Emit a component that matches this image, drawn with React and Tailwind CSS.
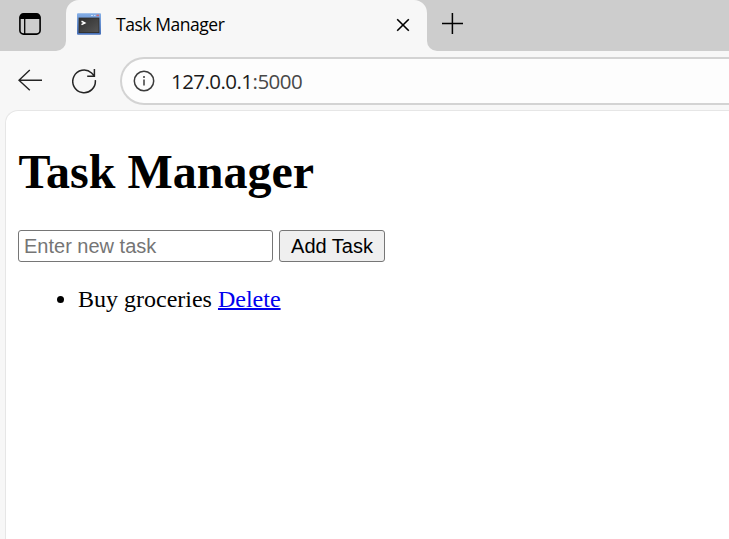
function TabActionsIcon() {
  return (
    <svg width="22" height="22" viewBox="0 0 22 22" fill="none" className="block">
      <rect x="0.9" y="0.9" width="20.2" height="20.2" rx="3.6" stroke="#000" strokeWidth="1.6" />
      <path d="M1 6V4a3 3 0 0 1 3-3h14a3 3 0 0 1 3 3v2z" fill="#000" />
      <path d="M5.7 6v15" stroke="#000" strokeWidth="1.3" />
    </svg>
  );
}

function TerminalIcon() {
  return (
    <svg width="24" height="22" viewBox="0 0 24 22" className="block">
      <defs>
        <linearGradient id="frame" x1="0" y1="0" x2="0" y2="1">
          <stop offset="0" stopColor="#84aee6" />
          <stop offset="1" stopColor="#466fb8" />
        </linearGradient>
        <linearGradient id="screen" x1="0" y1="0" x2="1" y2="1">
          <stop offset="0" stopColor="#303030" />
          <stop offset="1" stopColor="#555" />
        </linearGradient>
      </defs>
      <rect x="0" y="0.3" width="24" height="21.4" rx="1" fill="url(#frame)" />
      <path d="M14 2.5h2M17 2.5h1.5" stroke="#c9dcf5" strokeWidth="1" />
      <rect x="19.5" y="1.6" width="2.5" height="1.6" fill="#cf6b70" />
      <rect x="1.6" y="4.6" width="20.8" height="15.4" fill="#303030" />
      <rect x="2.5" y="5.5" width="19" height="13.6" fill="url(#screen)" />
      <path d="M4.5 8.3l3.2 1.6-3.2 1.7" stroke="#fff" strokeWidth="1.6" fill="none" />
    </svg>
  );
}

export default function App() {
  return (
    <div className="flex h-[539px] w-[729px] flex-col overflow-hidden bg-[#f7f7f7] font-['Liberation_Serif',serif] text-black">
      <div className="flex h-[51px] shrink-0">
        <div className="w-[66px] shrink-0 rounded-br-[10px] bg-[#cdcdcd] pt-[13px] pl-[19px]">
          <TabActionsIcon />
        </div>
        <div className="w-[361px] shrink-0 bg-[linear-gradient(#cdcdcd_50%,#f7f7f7_50%)]">
          <div className="flex h-full items-start rounded-t-[13px] bg-[#f7f7f7] pl-[11px]">
            <div className="mt-[13px]">
              <TerminalIcon />
            </div>
            <span className="mt-[12px] ml-[15px] w-[279px] font-['Open_Sans',sans-serif] text-[17.5px] leading-6 tracking-[-0.45px] whitespace-nowrap">
              Task Manager
            </span>
            <svg width="14" height="14" viewBox="0 0 14 14" className="mt-[18px] ml-[1px]">
              <path d="M1.2 1.2l11.6 11.6M12.8 1.2L1.2 12.8" stroke="#000" strokeWidth="1.6" />
            </svg>
          </div>
        </div>
        <div className="flex-1 rounded-bl-[10px] bg-[#cdcdcd] pt-[13px] pl-[15px]">
          <svg width="21" height="21" viewBox="0 0 21 21" className="block">
            <path d="M0 10.4h21M10.4 0v21" stroke="#000" strokeWidth="1.5" />
          </svg>
        </div>
      </div>

      <div className="flex h-[59px] shrink-0 items-start pl-[18px]">
        <svg width="24" height="22" viewBox="0 0 24 22" fill="none" className="mt-[18px] shrink-0">
          <path d="M24 11.3H1M11.8 1L1 11.3l10.8 10" stroke="#242424" strokeWidth="1.4" />
        </svg>
        <svg width="25" height="25" viewBox="0 0 25 25" fill="none" className="mt-[18px] ml-[30px] shrink-0">
          <path
            d="M23.3 11.2A11.3 11.3 0 1 1 19.6 4L22.4 7M22.4 0v7.3H15.2"
            stroke="#242424"
            strokeWidth="1.5"
          />
        </svg>
        <div className="mt-[6px] ml-[23px] flex h-12 flex-1 items-center rounded-l-full border-y-2 border-l-2 border-[#d3d3d3] bg-[#fdfdfd] pl-[11px]">
          <svg width="22" height="22" viewBox="0 0 22 22" fill="none" className="shrink-0">
            <circle cx="11" cy="11" r="9.7" stroke="#3b3b3b" strokeWidth="1.5" />
            <path d="M11 9.6v5.8" stroke="#3b3b3b" strokeWidth="1.5" />
            <circle cx="11" cy="7" r="1" fill="#3b3b3b" />
          </svg>
          <span className="ml-4 font-['Open_Sans',sans-serif] text-[20.5px] leading-7 tracking-[-0.55px] text-[#1b1b1b]">
            127.0.0.1<span className="text-[#484848]">:5000</span>
          </span>
        </div>
      </div>

      <main className="ml-[5px] flex-1 rounded-tl-[13px] border-t border-l border-[#e6e6e6] bg-white pt-[33px] pl-3">
        <h1 className="pl-[0.5px] text-[48px] leading-[55px] font-bold">Task Manager</h1>
        <form className="mt-[31px] flex gap-[6px] font-['Liberation_Sans',sans-serif] text-[20px]" onSubmit={(e) => e.preventDefault()}>
          <input
            type="text"
            placeholder="Enter new task"
            className="h-8 w-[255px] rounded-[3px] border border-[#767676] bg-white px-[5px] placeholder:text-[#757575]"
          />
          <button className="h-8 w-[106px] rounded-[3px] border border-[#767676] bg-[#efefef] leading-[30px] whitespace-nowrap">
            Add Task
          </button>
        </form>
        <ul className="mt-6 list-disc pl-[60px] text-[24px] leading-[27px]">
          <li>
            Buy groceries{" "}
            <a href="#" className="text-[#0000ee] underline decoration-2">
              Delete
            </a>
          </li>
        </ul>
      </main>
    </div>
  );
}
